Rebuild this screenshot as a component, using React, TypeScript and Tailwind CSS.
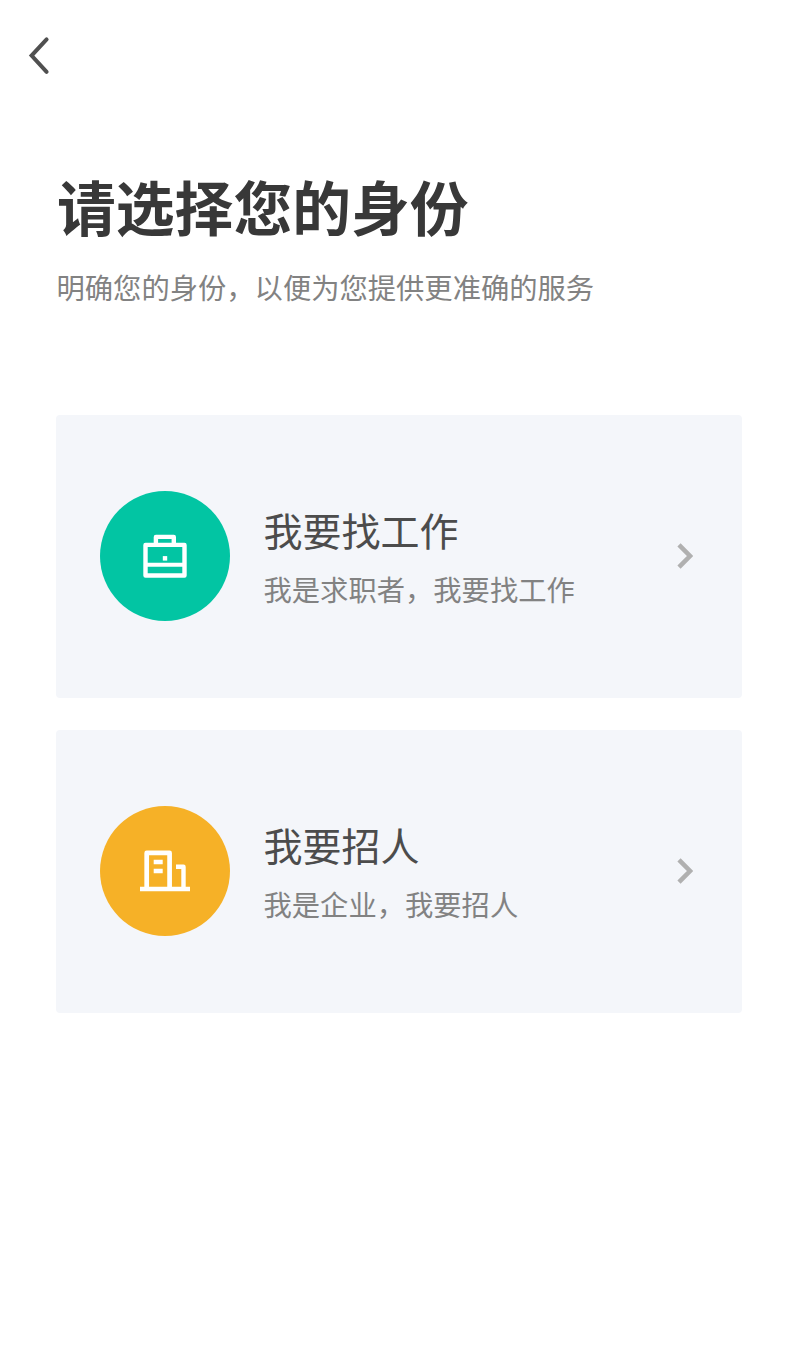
import type { ReactNode } from "react";

type RoleCardProps = { title: string; description: string; color: string; icon: ReactNode };

function BriefcaseIcon() {
  return (
    <svg width="50" height="50" viewBox="0 0 50 50" fill="none" stroke="white" strokeWidth="4.4" strokeLinejoin="round">
      <path d="M5.5 13.9H44.5V44.5H5.5ZM15.9 13.9V5.9H33.8V13.9" />
      <path d="M5.5 33.7H44.5" strokeWidth="4" />
      <rect x="22.8" y="25.1" width="4.4" height="4.5" fill="white" stroke="none" />
    </svg>
  );
}

function BuildingIcon() {
  return (
    <svg width="50" height="50" viewBox="0 0 50 50" fill="none" stroke="white" strokeWidth="4.7">
      <path d="M0 43H50M13.7 16H22.7M13.7 25H22.7" />
      <path d="M6.7 43V6.9H29.6V43" strokeLinejoin="round" />
      <path d="M36 20.7H43.5V43" strokeWidth="4.4" strokeLinejoin="round" />
    </svg>
  );
}

function RoleCard({ title, description, color, icon }: RoleCardProps) {
  return (
    <button className="flex h-[282.5px] w-full items-center rounded-[4px] bg-[#f4f6fa] pr-[49px] pl-11 text-left">
      <span className={`flex size-[130px] shrink-0 items-center justify-center rounded-full ${color}`}>{icon}</span>
      <span className="ml-[33.5px] flex flex-1 flex-col pt-1.5">
        <span className="text-[39px] leading-[59px] text-[#4c4c4c]">{title}</span>
        <span className="text-[28.3px] leading-[59px] text-[#828282]">{description}</span>
      </span>
      <svg width="16" height="26" viewBox="0 0 16 26" fill="none" stroke="#b0b0b0" strokeWidth="4.5">
        <path d="M2 1.8L13 13L2 24.2" />
      </svg>
    </button>
  );
}

export default function App() {
  return (
    <main className="min-h-[1345px] bg-white pr-[47px] pl-14 font-['Noto_Sans_CJK_SC',sans-serif]">
      <header className="flex h-[111px] items-center">
        <button aria-label="返回" className="-ml-7">
          <svg width="22" height="40" viewBox="0 0 22 40" fill="none" stroke="#505050" strokeWidth="4" strokeLinecap="round">
            <path d="M18.6 3.4L3.6 19.6L18.6 35.8" />
          </svg>
        </button>
      </header>
      <h1 className="mt-[51px] ml-px text-[58.8px] leading-[88px] font-bold text-[#383838]">请选择您的身份</h1>
      <p className="mt-[16px] ml-[0.5px] text-[28.3px] leading-[42px] text-[#828282]">明确您的身份，以便为您提供更准确的服务</p>
      <section className="mt-[107px] flex flex-col gap-[32.5px]">
        <RoleCard title="我要找工作" description="我是求职者，我要找工作" color="bg-[#02c5a3]" icon={<BriefcaseIcon />} />
        <RoleCard title="我要招人" description="我是企业，我要招人" color="bg-[#f6b127]" icon={<BuildingIcon />} />
      </section>
    </main>
  );
}
